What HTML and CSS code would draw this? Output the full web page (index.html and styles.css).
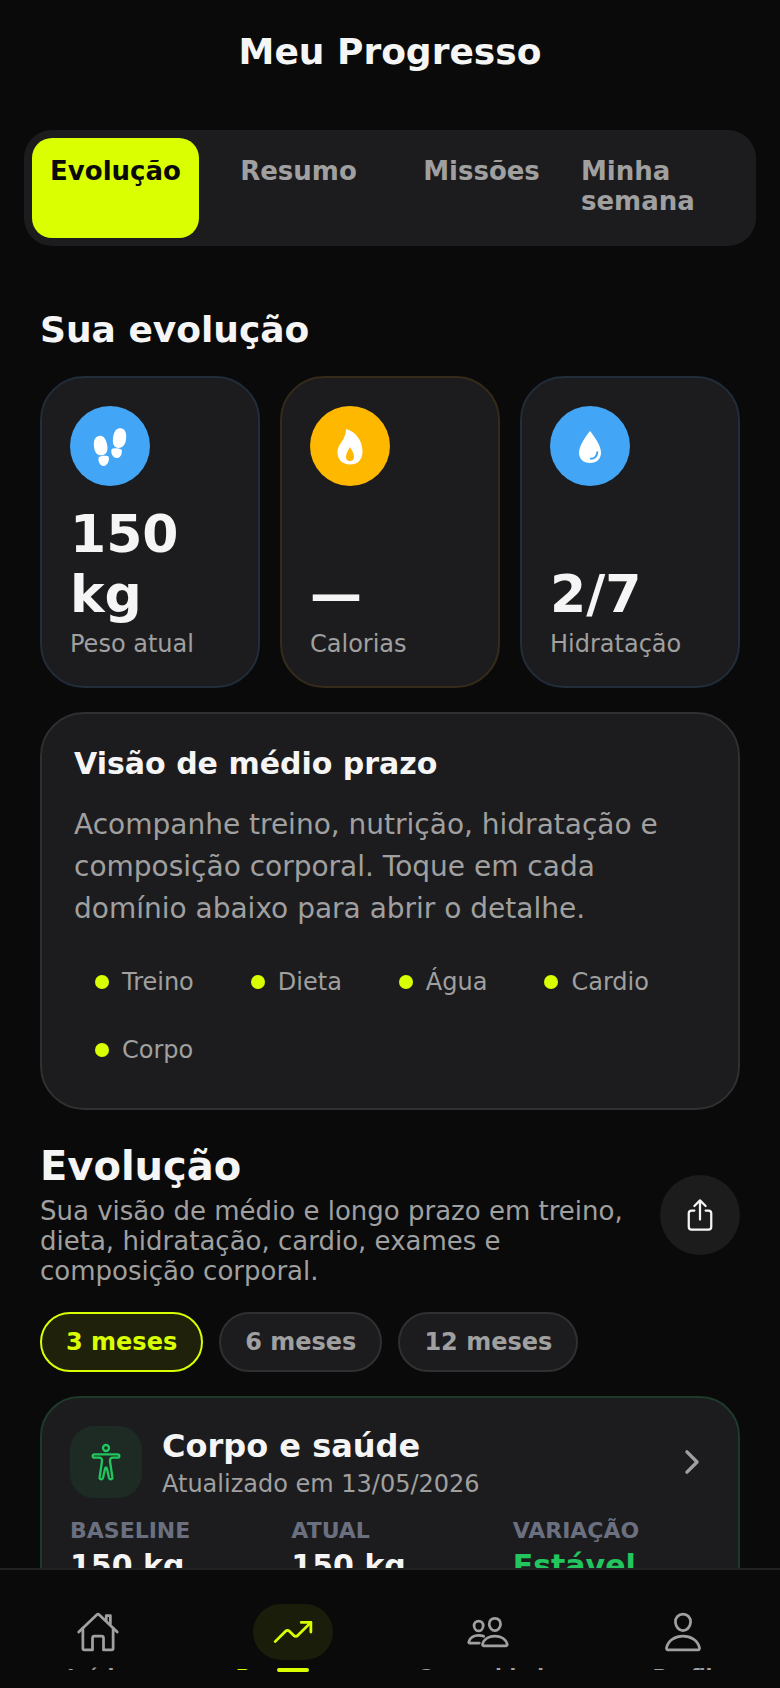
FILE: index.html
```html
<!DOCTYPE html>
<html lang="pt-BR">
<head>
  <meta charset="UTF-8" />
  <meta name="viewport" content="width=device-width, initial-scale=1.0"/>
  <title>Meu Progresso</title>
  <link rel="stylesheet" href="styles.css">
</head>

<body>
  <header class="header">
    <h1>Meu Progresso</h1>
  </header>

  <!-- Abas -->
  <div class="tabs">
    <button type="button" class="tab active">Evolução</button>
    <button type="button" class="tab">Resumo</button>
    <button type="button" class="tab">Missões</button>
    <button type="button" class="tab">Minha semana</button>
  </div>

  <main class="content">
    <h2 class="section-title">Sua evolução</h2>

    <!-- Métricas -->
    <div class="metrics">
      <div class="metric blue">
        <span class="metric-icon">
          <svg viewBox="0 0 120 120" width="40" height="40" fill="currentColor">
            <path d="M27 30C40 27 49 40 52 60C54 76 49 86 36 88C22 89 14 80 12 63C10 44 15 32 27 30Z"/>
            <path d="M26 94C28 90 51 87 56 92C59 104 53 118 42 120C31 121 23 108 26 94Z"/>
            <path d="M93 7C80 4 71 17 69 37C67 53 71 64 84 66C98 67 106 57 108 40C111 21 105 9 93 7Z"/>
            <path d="M95 71C93 67 70 64 65 69C61 81 68 95 79 96C89 97 98 86 95 71Z"/>
          </svg>
        </span>
        <div class="metric-value">150 kg</div>
        <div class="metric-label">Peso atual</div>
      </div>
      <div class="metric amber">
        <span class="metric-icon">
          <svg viewBox="0 0 40 40" width="40" height="40" fill="currentColor" fill-rule="evenodd">
            <path d="M16 4C15.300 3.400 16 3 17 3.200C25 5.500 32.500 14 32.500 25.500C32.500 34 27.500 38.500 20 38.500C12.500 38.500 7.500 33.500 7.500 26.500C7.500 20.500 10.500 18 12.800 14C14.500 11 15.500 8 16 4ZM20 21C18.500 24 16 27 16 31C16 33.500 17.500 35 20 35C22.500 35 24 33.500 24 30.500C24 27 21.500 24 20 21Z"/>
          </svg>
        </span>
        <div class="metric-value">—</div>
        <div class="metric-label">Calorias</div>
      </div>
      <div class="metric blue">
        <span class="metric-icon">
          <svg viewBox="0 0 40 40" width="40" height="40">
            <path fill="currentColor" d="M20 5C24 10 31 19.500 31 26.500C31 33 26.500 37 20 37C13.500 37 9 33 9 26.500C9 19.500 16 10 20 5Z"/>
            <path class="drop-shine" d="M20.800 32.800C24.500 32.800 27.300 30 27.300 26.300"/>
          </svg>
        </span>
        <div class="metric-value">2/7</div>
        <div class="metric-label">Hidratação</div>
      </div>
    </div>

    <!-- Visão geral -->
    <section class="card overview">
      <h3>Visão de médio prazo</h3>
      <p>Acompanhe treino, nutrição, hidratação e composição corporal. Toque em cada domínio abaixo para abrir o detalhe.</p>
      <div class="domains">
        <button type="button" class="domain">Treino</button>
        <button type="button" class="domain">Dieta</button>
        <button type="button" class="domain">Água</button>
        <button type="button" class="domain">Cardio</button>
        <button type="button" class="domain">Corpo</button>
      </div>
    </section>

    <div class="evolution-head">
      <div class="evolution-text">
        <h2>Evolução</h2>
        <p>Sua visão de médio e longo prazo em treino, dieta, hidratação, cardio, exames e composição corporal.</p>
      </div>
      <button type="button" class="share" aria-label="Compartilhar">
        <svg viewBox="0 0 512 512" width="36" height="36">
          <path d="M336 192h40a40 40 0 0 1 40 40v192a40 40 0 0 1-40 40H136a40 40 0 0 1-40-40V232a40 40 0 0 1 40-40h40M336 128l-80-80-80 80M256 321V48"/>
        </svg>
      </button>
    </div>

    <div class="periods">
      <button type="button" class="period active">3 meses</button>
      <button type="button" class="period">6 meses</button>
      <button type="button" class="period">12 meses</button>
    </div>

    <!-- Corpo e saúde -->
    <section class="card health">
      <div class="health-head">
        <span class="health-icon">
          <svg class="body-icon" viewBox="0 0 120 120" width="40" height="40">
            <circle cx="60" cy="18" r="9"/>
            <path d="M25 37H95a5 5 0 0 1 0 10H80Q71 47 72 58L79 105a5 5 0 0 1-10 3L63 80q-3-8-6 0L51 108a5 5 0 0 1-10-3L48 58Q49 47 40 47H25a5 5 0 0 1 0-10Z"/>
          </svg>
        </span>
        <div class="health-title">
          <h3>Corpo e saúde</h3>
          <p>Atualizado em 13/05/2026</p>
        </div>
        <svg class="chevron" viewBox="0 0 512 512" width="36" height="36">
          <path d="M184 112l144 144-144 144"/>
        </svg>
      </div>
      <dl class="stats">
        <div>
          <dt>BASELINE</dt>
          <dd>150 kg</dd>
        </div>
        <div>
          <dt>ATUAL</dt>
          <dd>150 kg</dd>
        </div>
        <div>
          <dt>VARIAÇÃO</dt>
          <dd class="good">Estável</dd>
        </div>
      </dl>
    </section>
  </main>

  <!-- Navegação inferior -->
  <nav class="bottom-nav">
    <a href="#inicio" class="nav-item">
      <span class="nav-icon">
        <svg viewBox="0 0 512 512" width="44" height="44">
          <path d="M80 212v236a16 16 0 0 0 16 16h96V328a24 24 0 0 1 24-24h80a24 24 0 0 1 24 24v136h96a16 16 0 0 0 16-16V212"/>
          <path d="M480 256L266.890 52c-5-5.280-16.690-5.340-21.780 0L32 256M400 179V64h-48v69"/>
        </svg>
      </span>
      <span class="nav-label">Início</span>
    </a>
    <a href="#progresso" class="nav-item active">
      <span class="nav-icon">
        <svg viewBox="0 0 512 512" width="44" height="44">
          <path d="M352 144h112v112"/>
          <path d="M48 368l121.370-121.370a32 32 0 0 1 45.260 0l50.740 50.740a32 32 0 0 0 45.260 0L464 144"/>
        </svg>
      </span>
      <span class="nav-label">Progresso</span>
    </a>
    <a href="#comunidade" class="nav-item">
      <span class="nav-icon">
        <svg viewBox="0 0 512 512" width="44" height="44">
          <path d="M402 168c-2.930 40.670-33.100 72-66 72s-63.120-31.320-66-72c-3-42.310 26.370-72 66-72s69 30.460 66 72Z"/>
          <path d="M336 304c-65.170 0-127.840 32.370-143.540 95.410-2.080 8.340 3.150 16.590 11.720 16.590h263.650c8.570 0 13.770-8.250 11.720-16.590C463.850 335.360 401.180 304 336 304Z"/>
          <path d="M200 185.940c-2.340 32.480-26.720 58.060-53 58.060s-50.700-25.570-53-58.060C91.610 152.150 115.340 128 147 128s55.390 24.770 53 57.940ZM206 306c-18.050-8.270-37.930-11.450-59-11.450-52 0-102.100 25.850-114.650 76.200-1.650 6.660 2.530 13.250 9.370 13.250H154"/>
        </svg>
      </span>
      <span class="nav-label">Comunidade</span>
    </a>
    <a href="#perfil" class="nav-item">
      <span class="nav-icon">
        <svg viewBox="0 0 512 512" width="44" height="44">
          <path d="M344 144c-3.920 52.870-44 96-88 96s-84.150-43.120-88-96c-4-55 35-96 88-96s92 42 88 96Z"/>
          <path d="M256 304c-87 0-175.300 48-191.640 138.600C62.390 453.520 68.570 464 80 464h352c11.440 0 17.620-10.480 15.650-21.400C431.300 352 343 304 256 304Z"/>
        </svg>
      </span>
      <span class="nav-label">Perfil</span>
    </a>
  </nav>
</body>
</html>
```

FILE: styles.css
```css
* {
  box-sizing: border-box;
  margin: 0;
  padding: 0;
}

body {
  font-family: 'DejaVu Sans', Verdana, sans-serif;
  background-color: #0a0a0a;
  color: #f5f5f5;
  display: flex;
  flex-direction: column;
  height: 100vh;
  overflow: hidden;
}

button {
  font-family: inherit;
  border: none;
  cursor: pointer;
}

svg {
  display: block;
  flex-shrink: 0;
}

.header {
  padding: 31px 24px 57px;
  text-align: center;
}

.header h1 {
  font-size: 36px;
  line-height: 42px;
}

/* Abas */
.tabs {
  display: flex;
  gap: 16px;
  margin: 0 24px;
  padding: 8px;
  border-radius: 28px;
  background-color: #1c1c1e;
}

.tab {
  flex: 1 1 0;
  min-width: 0;
  min-height: 100px;
  display: flex;
  justify-content: center;
  align-items: flex-start;
  padding: 18px 0;
  border-radius: 20px;
  background: none;
  color: #a0a0a0;
  font-size: 26px;
  font-weight: bold;
  line-height: 30px;
  text-align: left;
}

.tab.active {
  background-color: #d9ff00;
  color: #0a0a0a;
}

/* Conteúdo */
.content {
  flex: 1;
  min-height: 0;
  padding: 63px 40px 0;
  overflow: hidden;
}

.section-title {
  font-size: 36px;
  line-height: 42px;
  margin-bottom: 25px;
}

.metrics {
  display: grid;
  grid-template-columns: repeat(3, 1fr);
  gap: 20px;
  margin-bottom: 24px;
}

.metric {
  display: flex;
  flex-direction: column;
  min-height: 312px;
  padding: 28px;
  border: 2px solid;
  border-radius: 44px;
  background-color: #1c1c1e;
}

.metric.blue {
  border-color: #212d3a;
}

.metric.amber {
  border-color: #362b1a;
}

.metric-icon {
  width: 80px;
  height: 80px;
  margin-bottom: 16px;
  border-radius: 50%;
  display: flex;
  align-items: center;
  justify-content: center;
  color: #fff;
}

.blue .metric-icon {
  background-color: #42a5f5;
}

.amber .metric-icon {
  background-color: #ffb800;
}

.drop-shine {
  fill: none;
  stroke: #42a5f5;
  stroke-width: 2;
  stroke-linecap: round;
}

.metric-value {
  margin-top: auto;
  margin-bottom: 6px;
  font-size: 52px;
  font-weight: bold;
  line-height: 60px;
}

.metric-label {
  color: #a0a0a0;
  font-size: 24px;
  line-height: 28px;
}

.card {
  border: 2px solid #303032;
  border-radius: 44px;
  background-color: #1c1c1e;
}

.overview {
  padding: 32px;
  margin-bottom: 34px;
}

.overview h3 {
  font-size: 30px;
  line-height: 36px;
  margin-bottom: 22px;
}

.overview p {
  color: #a0a0a0;
  font-size: 28px;
  line-height: 42px;
  margin-bottom: 26px;
}

.domains {
  display: flex;
  flex-wrap: wrap;
  gap: 16px;
}

.domain {
  display: flex;
  align-items: center;
  gap: 13px;
  padding: 12px 20px 12px 21px;
  background: none;
  color: #a0a0a0;
  font-size: 24px;
  line-height: 28px;
}

.domain::before {
  content: "";
  width: 14px;
  height: 14px;
  border-radius: 50%;
  background-color: #d9ff00;
}

.evolution-head {
  display: flex;
  align-items: center;
  gap: 24px;
  margin-bottom: 26px;
}

.evolution-text {
  flex: 1;
}

.evolution-head h2 {
  font-size: 40px;
  line-height: 44px;
  margin-bottom: 8px;
}

.evolution-head p {
  color: #a0a0a0;
  font-size: 26px;
  line-height: 30px;
}

.share {
  width: 80px;
  height: 80px;
  border-radius: 50%;
  display: flex;
  align-items: center;
  justify-content: center;
  background-color: #1c1c1c;
  color: #f5f5f5;
}

.share svg,
.health svg,
.nav-icon svg {
  fill: none;
  stroke: currentColor;
  stroke-width: 32;
  stroke-linecap: round;
  stroke-linejoin: round;
}

.periods {
  display: flex;
  gap: 16px;
  margin-bottom: 24px;
}

.period {
  height: 60px;
  padding: 0 24px;
  border: 2px solid #303032;
  border-radius: 30px;
  background-color: #1c1c1e;
  color: #a0a0a0;
  font-size: 24px;
  font-weight: bold;
}

.period.active {
  border-color: #d9ff00;
  background-color: #1f210b;
  color: #d9ff00;
}

.health {
  padding: 28px;
  border-color: #1e3a2a;
  border-radius: 40px;
}

.health-head {
  display: flex;
  align-items: center;
  gap: 20px;
  margin-bottom: 20px;
}

.health-icon {
  width: 72px;
  height: 72px;
  border-radius: 24px;
  display: flex;
  align-items: center;
  justify-content: center;
  background-color: #1d2b24;
  color: #22c55e;
}

.health .body-icon {
  stroke-width: 7;
}

.health-title {
  flex: 1;
}

.health-title h3 {
  font-size: 32px;
  line-height: 40px;
  margin-bottom: 4px;
}

.health-title p {
  color: #a0a0a0;
  font-size: 24px;
  line-height: 28px;
}

.health .chevron {
  color: #a0a0a0;
  stroke-width: 48;
}

.stats {
  display: grid;
  grid-template-columns: repeat(3, 1fr);
  gap: 24px;
}

.stats dt {
  color: #6b7080;
  font-size: 22px;
  font-weight: bold;
  line-height: 26px;
  margin-bottom: 4px;
}

.stats dd {
  font-size: 30px;
  font-weight: bold;
  line-height: 36px;
}

.stats .good {
  color: #22c55e;
}

/* Navegação inferior */
.bottom-nav {
  display: flex;
  padding: 34px 0 16px;
  border-top: 2px solid #222;
  background-color: #0a0a0a;
}

.nav-item {
  position: relative;
  flex: 1;
  height: 68px;
  display: flex;
  flex-direction: column;
  align-items: center;
  color: #a0a0a0;
  text-decoration: none;
}

.nav-icon {
  width: 80px;
  height: 56px;
  flex-shrink: 0;
  border-radius: 28px;
  display: flex;
  align-items: center;
  justify-content: center;
}

.nav-label {
  height: 10px;
  padding-top: 4px;
  overflow: hidden;
  font-size: 20px;
  font-weight: bold;
  line-height: 24px;
}

.nav-item.active {
  color: #d9ff00;
}

.nav-item.active .nav-icon {
  background-color: #1a1d0a;
}

.nav-item.active::after {
  content: "";
  position: absolute;
  bottom: 0;
  left: 50%;
  width: 32px;
  height: 4px;
  margin-left: -16px;
  border-radius: 2px;
  background-color: #d9ff00;
}
```
